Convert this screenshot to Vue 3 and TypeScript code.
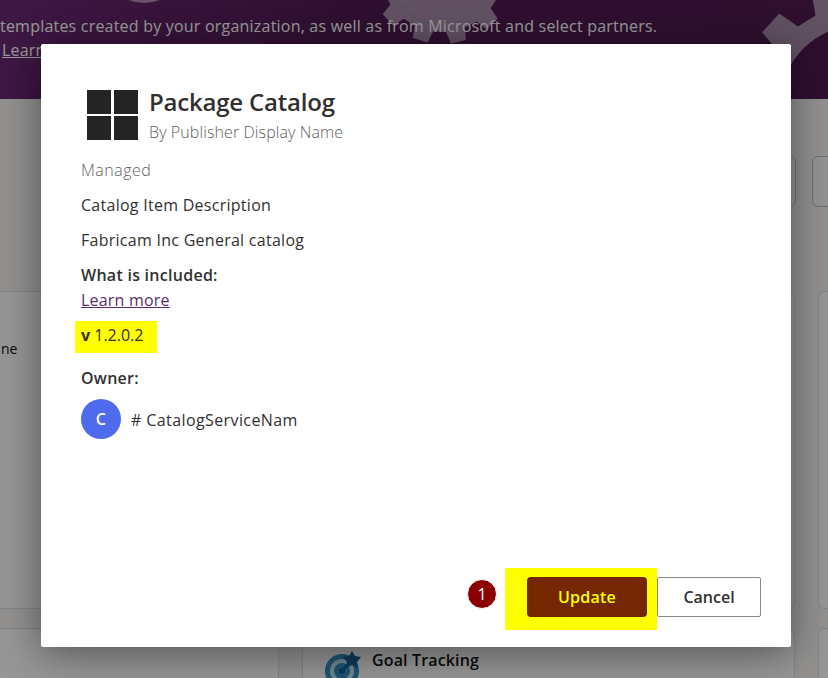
<script setup lang="ts">
function gear(cx: number, cy: number, inner: number, outer: number, teeth: number, rot: number): string {
  const pts: string[] = [];
  const step = (Math.PI * 2) / teeth;
  for (let i = 0; i < teeth; i++) {
    const a = rot + i * step;
    const spec: [number, number][] = [
      [inner, a - step * 0.3],
      [outer, a - step * 0.2],
      [outer, a + step * 0.2],
      [inner, a + step * 0.3],
    ];
    for (const [r, t] of spec) {
      pts.push(`${(cx + r * Math.cos(t)).toFixed(1)} ${(cy + r * Math.sin(t)).toFixed(1)}`);
    }
  }
  return "M" + pts.join("L") + "Z";
}
const gearOne = gear(442, -30, 62, 74, 12, 0.3);
const gearTwo = gear(860, 105, 100, 122, 12, 0.22);
</script>

<template>
  <div class="page">
    <header class="banner">
      <svg class="gears" width="828" height="99" viewBox="0 0 828 99" aria-hidden="true">
        <circle cx="144" cy="-40" r="43" class="gear" />
        <path :d="gearOne" class="gear" />
        <circle cx="442" cy="-30" r="55" class="gear-ring" />
        <path :d="gearTwo" class="gear" />
        <circle cx="860" cy="105" r="80" class="gear-hole" />
      </svg>
      <p class="banner-text">templates created by your organization, as well as from Microsoft and select partners.</p>
      <a class="banner-link">Learn more</a>
    </header>

    <div class="toolbar">
      <span class="tool tool-a"></span>
      <span class="tool tool-b"></span>
    </div>

    <section class="cards">
      <div class="card card-left"><span class="clip">ne</span></div>
      <div class="card"></div>
      <div class="card card-right"></div>
      <div class="card card-low card-left-low"></div>
      <div class="card card-low goal">
        <svg width="38" height="38" viewBox="0 0 38 38" aria-hidden="true">
          <circle cx="18" cy="21" r="17" fill="#2f8fc0" />
          <circle cx="18" cy="21" r="12" fill="#bfe0ee" />
          <circle cx="18" cy="21" r="8" fill="#2f8fc0" />
          <circle cx="18" cy="21" r="3" fill="#1c5f94" />
          <path d="M18 21 28 10" stroke="#1c5f94" stroke-width="3" />
          <path d="M28 1l3 5 6 1-4 5 1 6-6-3-6 3 1-6-4-5 6-1z" fill="#1c5f94" />
        </svg>
        <strong>Goal Tracking</strong>
      </div>
      <div class="card card-low card-right"></div>
    </section>

    <div class="overlay">
      <div class="dialog">
        <div class="head">
          <div class="logo"><i></i><i></i><i></i><i></i></div>
          <div class="head-text">
            <h1>Package Catalog</h1>
            <p class="publisher">By Publisher Display Name</p>
          </div>
        </div>
        <p class="managed">Managed</p>
        <p class="line">Catalog Item Description</p>
        <p class="line">Fabricam Inc General catalog</p>
        <p class="label">What is included:</p>
        <a class="learn">Learn more</a>
        <div class="version"><b>v</b> 1.2.0.2</div>
        <p class="label owner-label">Owner:</p>
        <div class="owner">
          <span class="avatar">C</span>
          <span class="owner-name"># CatalogServiceNam</span>
        </div>
        <div class="footer">
          <span class="badge">1</span>
          <div class="highlight"><button class="update" type="button">Update</button></div>
          <button class="cancel" type="button">Cancel</button>
        </div>
      </div>
    </div>
  </div>
</template>

<style>
html, body { margin: 0; padding: 0; background: #f3f2f1; }
</style>

<style scoped>
.page {
  position: relative;
  width: 828px;
  height: 678px;
  overflow: hidden;
  background: #f3f2f1;
  font-family: "Open Sans", "Noto Sans", sans-serif;
  color: #323130;
}
p, h1 { margin: 0; }

.banner {
  position: relative;
  height: 99px;
  box-sizing: border-box;
  padding: 14px 0 0 2px;
  background: linear-gradient(100deg, #6a2873 0%, #4f1a52 40%, #4e1a4e 100%);
  color: #fff;
  font-size: 16px;
  line-height: 24px;
  letter-spacing: 0.21px;
  overflow: hidden;
}
.gears { position: absolute; left: 0; top: 0; }
.gear { fill: rgba(255, 255, 255, 0.48); }
.gear-ring { fill: none; stroke: rgba(120, 120, 170, 0.3); }
.gear-hole { fill: #4e1a4e; }
.banner-text { position: relative; margin-left: -2px; white-space: nowrap; }
.banner-link { position: relative; text-decoration: underline; }

.toolbar {
  display: flex;
  justify-content: flex-end;
  gap: 16px;
  height: 192px;
  box-sizing: border-box;
  padding-top: 57px;
  margin-right: -62px;
}
.tool {
  display: block;
  height: 49px;
  border: 1px solid #bdbdbd;
  border-radius: 6px;
  background: #f5f5f5;
}
.tool-a { width: 60px; }
.tool-b { width: 76px; }

.cards {
  display: grid;
  grid-template-columns: 279px 493px 60px;
  grid-template-rows: 318px 80px;
  column-gap: 23px;
  row-gap: 19px;
}
.card {
  box-sizing: border-box;
  background: #fafafa;
  border: 1px solid #dcdcdc;
  border-radius: 6px;
  font-size: 14px;
}
.card-left { margin-left: -10px; padding: 47px 0 0 10px; color: #111; }
.card-left-low { margin-left: -10px; }
.clip { display: block; }
.goal {
  display: flex;
  align-items: flex-start;
  gap: 10px;
  padding: 21px 0 0 21px;
  color: #111;
  font-size: 16px;
}
.goal strong { font-weight: 600; margin-top: -1px; letter-spacing: 0.15px; }

.overlay {
  position: absolute;
  inset: 0;
  background: rgba(0, 0, 0, 0.4);
  padding: 44px 37px 31px 41px;
}
.dialog {
  position: relative;
  display: flex;
  flex-direction: column;
  align-items: flex-start;
  box-sizing: border-box;
  height: 603px;
  padding: 46px 30px 17px 40px;
  background: #fff;
  border-radius: 2px;
  box-shadow: 0 6px 40px rgba(0, 0, 0, 0.45);
  font-size: 16px;
  line-height: 24px;
  letter-spacing: 0.27px;
}
.head { display: flex; align-items: center; gap: 11px; margin-left: 6px; height: 50px; }
.logo {
  display: grid;
  grid-template-columns: 24px 24px;
  grid-template-rows: 24px 24px;
  gap: 2.5px 3px;
}
.logo i { display: block; background: #242424; }
.head-text { display: flex; flex-direction: column; }
h1 { font-size: 24px; line-height: 30px; font-weight: 600; color: #323130; margin-top: -2px; letter-spacing: -0.2px; }
.publisher { font-size: 16px; line-height: 20px; margin-top: 5px; font-weight: 300; color: #605e5c; letter-spacing: 0.1px; }
.managed { margin-top: 18px; font-weight: 300; color: #616161; letter-spacing: 0.5px; }
.line { margin-top: 11px; }
.label { margin-top: 11px; font-weight: 600; }
.learn { margin-top: 1px; color: #5c2d6e; text-decoration: underline; letter-spacing: 0.2px; }
.version {
  margin: 9px 0 0 -6px;
  width: 82px;
  height: 32px;
  box-sizing: border-box;
  padding: 2px 0 0 6px;
  background: #ffff00;
  letter-spacing: 0;
}
.version b { font-weight: 700; }
.owner-label { margin-top: 13px; }
.owner { display: flex; align-items: center; gap: 10px; margin-top: 9px; }
.owner-name { letter-spacing: 0.4px; padding-top: 1px; }
.avatar {
  display: flex;
  align-items: center;
  justify-content: center;
  width: 40px;
  height: 40px;
  border-radius: 50%;
  background: #4f6bed;
  color: #fff;
  font-weight: 600;
}
.footer {
  display: flex;
  align-items: flex-start;
  margin-top: auto;
  align-self: flex-end;
}
.badge {
  box-sizing: border-box;
  display: flex;
  align-items: center;
  justify-content: center;
  width: 30px;
  height: 30px;
  margin: 11px 8px 0 0;
  border: 1px solid #fff;
  border-radius: 50%;
  background: #8b0000;
  color: #fff;
  font-size: 16px;
  letter-spacing: 0;
}
.highlight {
  display: flex;
  justify-content: flex-end;
  align-items: flex-start;
  box-sizing: border-box;
  width: 152px;
  height: 62px;
  padding: 9px 10px 0 0;
  background: #ffff00;
}
button {
  height: 40px;
  padding: 0;
  font: inherit;
  font-weight: 600;
  letter-spacing: 0;
  border-radius: 4px;
}
.update { width: 120px; border: 0; background: #742700; color: #ffff00; letter-spacing: 0.25px; }
.cancel { width: 104px; margin-top: 9px; border: 1px solid #8a8886; border-radius: 2px; background: #fff; color: #323130; }
</style>
